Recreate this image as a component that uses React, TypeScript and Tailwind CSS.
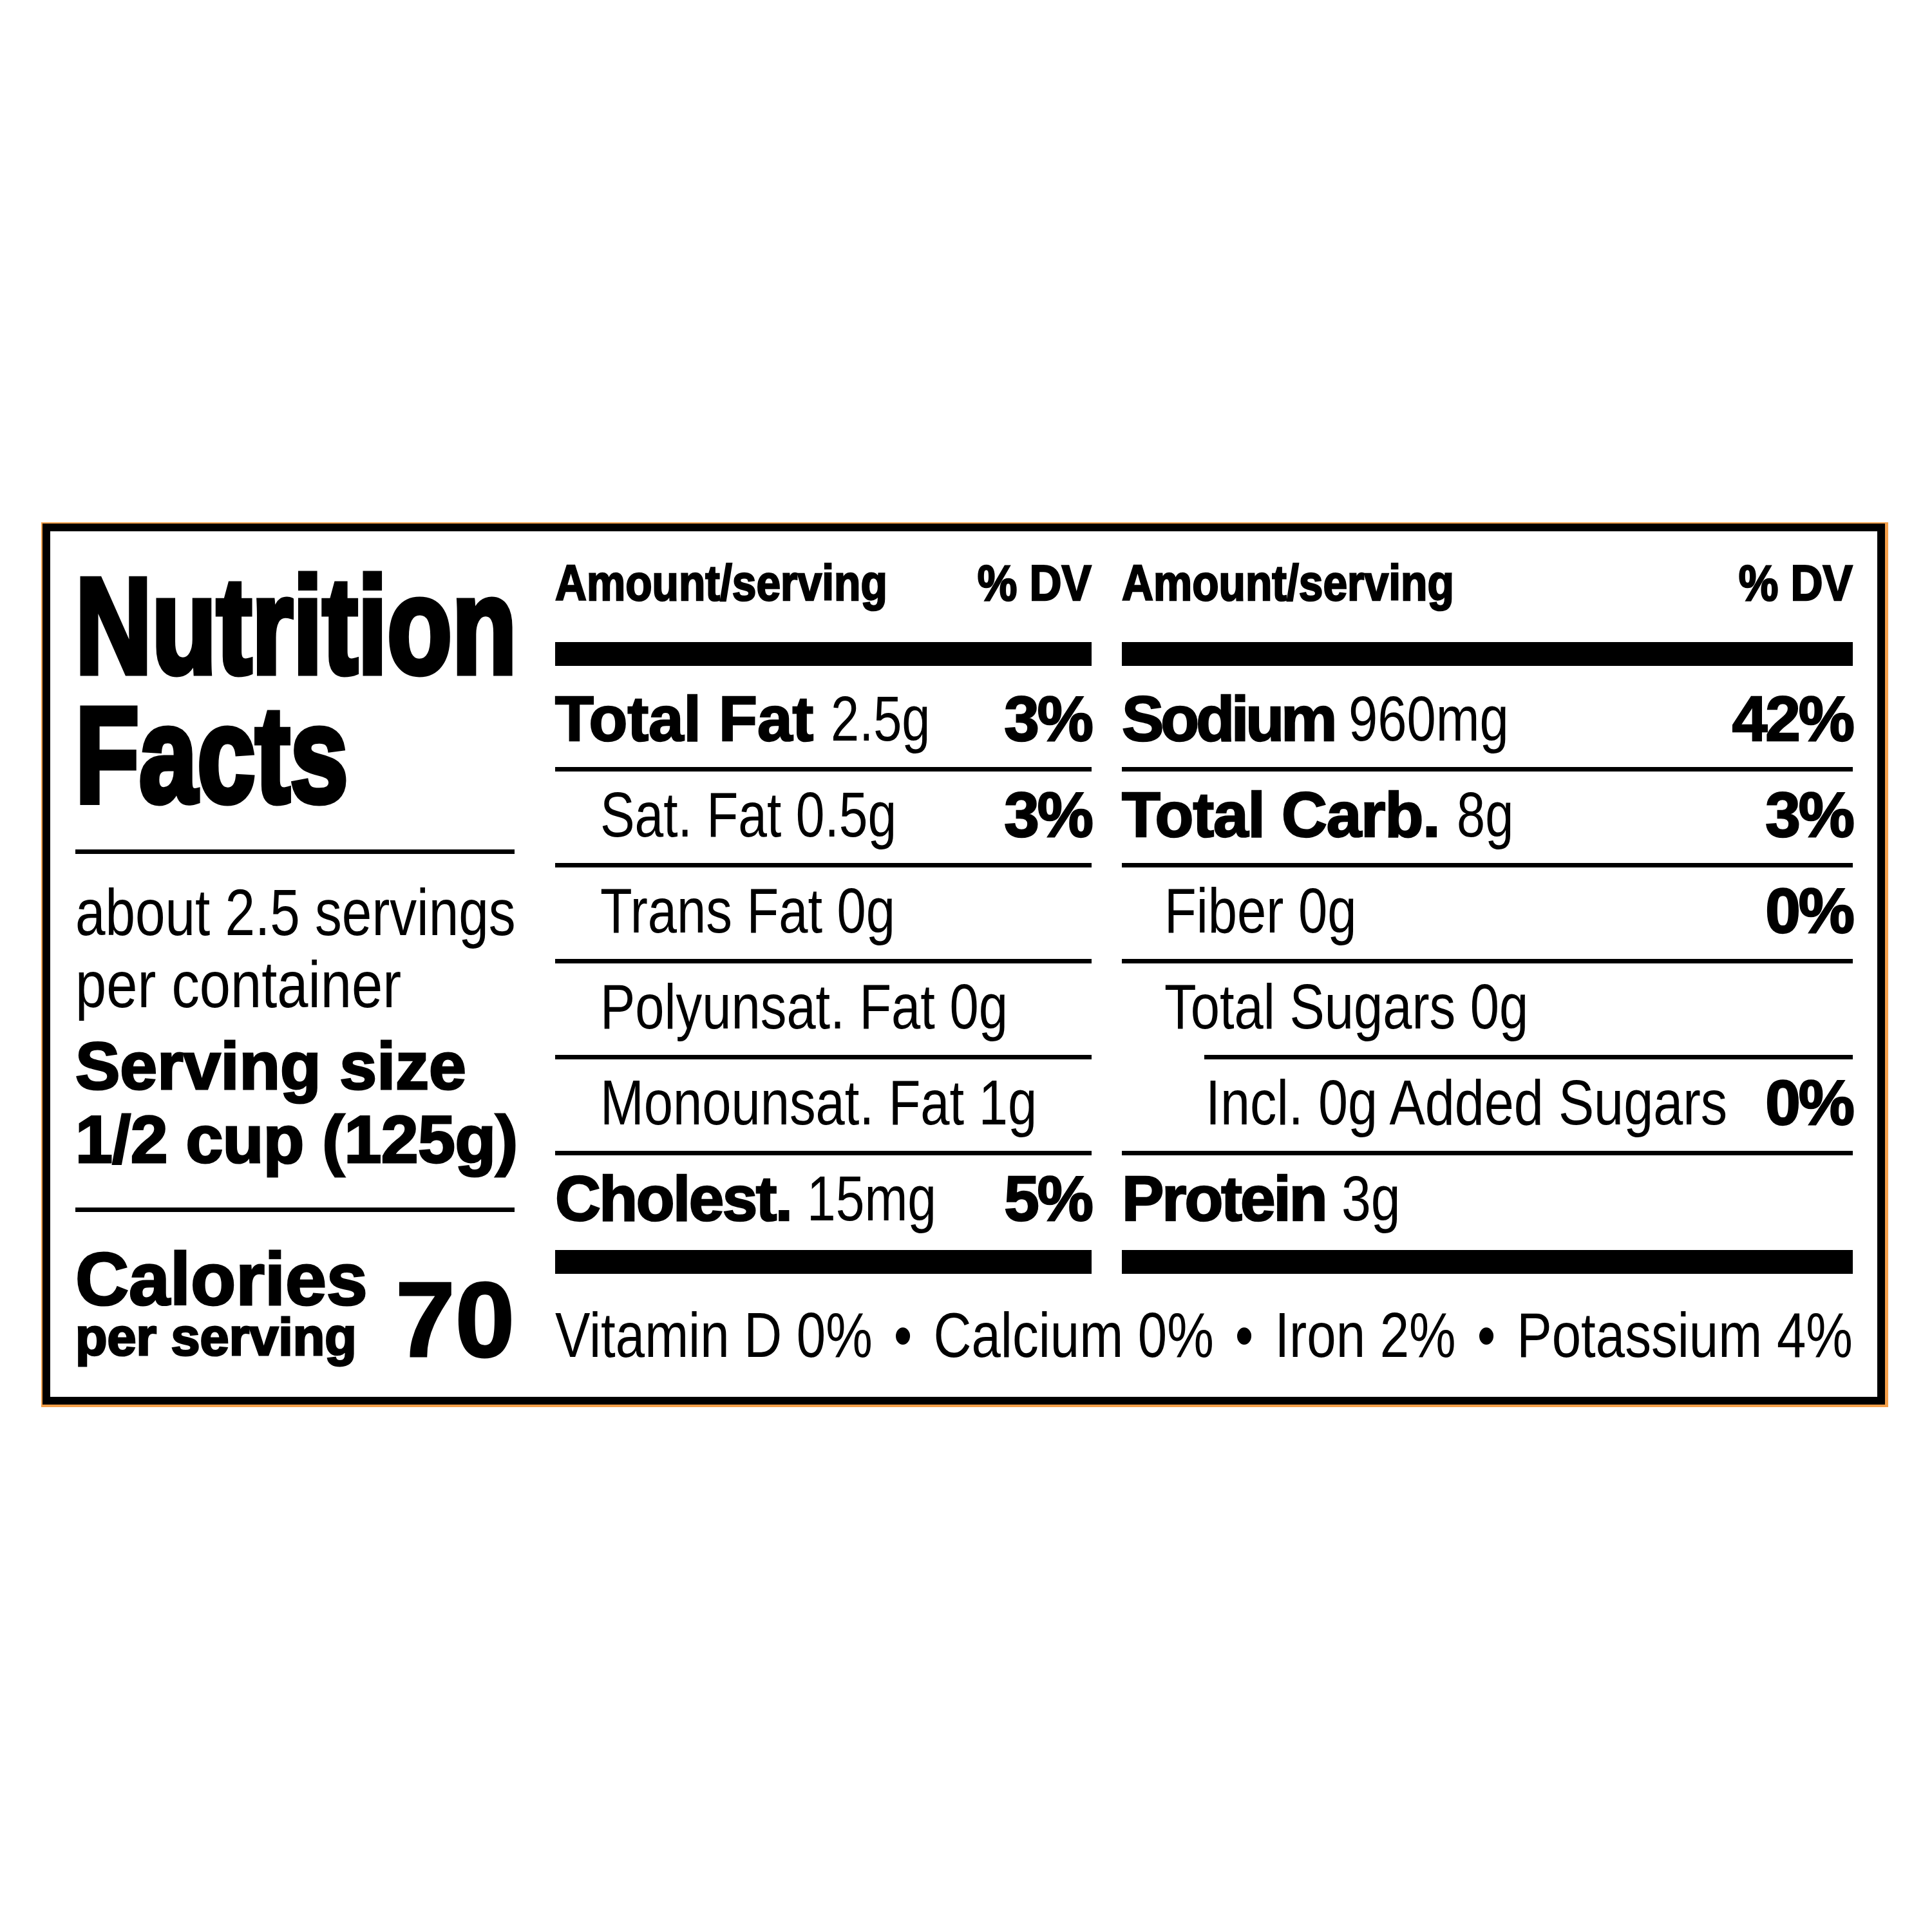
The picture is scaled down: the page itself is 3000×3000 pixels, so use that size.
import React from "react";

const SANS = "font-['Liberation_Sans','Arial',sans-serif]";

type Row = {
  bold?: string;
  boldCls?: string;
  reg?: string;
  regCls?: string;
  pct?: string;
  indent?: number;
  lineIndent?: number;
  last?: boolean;
};

const mid: Row[] = [
  { bold: "Total Fat", boldCls: "tracking-[0px]", reg: "2.5g", regCls: "scale-x-[0.81]", pct: "3%" },
  { reg: "Sat. Fat 0.5g", regCls: "scale-x-[0.82]", pct: "3%", indent: 70 },
  { reg: "Trans Fat 0g", regCls: "scale-x-[0.83]", indent: 70 },
  { reg: "Polyunsat. Fat 0g", regCls: "scale-x-[0.83]", indent: 70 },
  { reg: "Monounsat. Fat 1g", regCls: "scale-x-[0.83]", indent: 70 },
  { bold: "Cholest.", boldCls: "tracking-[-2.5px]", reg: "15mg", regCls: "scale-x-[0.82]", pct: "5%", last: true },
];

const right: Row[] = [
  { bold: "Sodium", boldCls: "tracking-[-5px]", reg: "960mg", regCls: "scale-x-[0.83]", pct: "42%" },
  { bold: "Total Carb.", boldCls: "tracking-[-1px]", reg: "8g", regCls: "scale-x-[0.81]", pct: "3%" },
  { reg: "Fiber 0g", regCls: "scale-x-[0.83]", pct: "0%", indent: 66 },
  { reg: "Total Sugars 0g", regCls: "scale-x-[0.83]", indent: 66, lineIndent: 128 },
  { reg: "Incl. 0g Added Sugars", regCls: "scale-x-[0.845]", pct: "0%", indent: 130 },
  { bold: "Protein", boldCls: "tracking-[-3px]", reg: "3g", regCls: "scale-x-[0.84]", last: true },
];

function NutRow({ r }: { r: Row }) {
  return (
    <div className="flex flex-col">
      <div
        className={`${SANS} h-[142px] flex justify-between text-[98px] leading-[134px] text-black whitespace-nowrap`}
        style={{ paddingLeft: r.indent ?? 0 }}
      >
        <div className="flex-1 min-w-0">
          {r.bold && (
            <span className={`font-bold [-webkit-text-stroke:2.5px_black] ${r.boldCls ?? ""}`}>{r.bold} </span>
          )}
          {r.reg && <span className={`inline-block origin-left ${r.regCls ?? ""}`}>{r.reg}</span>}
        </div>
        {r.pct && (
          <div className="shrink-0 font-bold tracking-[-3px] [-webkit-text-stroke:2.5px_black]">{r.pct}</div>
        )}
      </div>
      {!r.last && <div className="h-[7px] bg-black" style={{ marginLeft: r.lineIndent ?? 0 }} />}
    </div>
  );
}

function Column({ rows, width }: { rows: Row[]; width: string }) {
  return (
    <div className={`${width} shrink-0 flex flex-col`}>
      <div
        className={`${SANS} font-bold flex justify-between text-[77px] leading-[90px] whitespace-nowrap [-webkit-text-stroke:2.5px_black]`}
      >
        <span className="inline-block origin-left scale-x-[0.88]">Amount/serving</span>
        <span className="inline-block origin-right scale-x-[0.9]">% DV</span>
      </div>
      <div className="mt-[47px] h-[37px] bg-black" />
      <div className="pt-[15px] flex flex-col">
        {rows.map((r, i) => (
          <NutRow key={i} r={r} />
        ))}
      </div>
      <div className="mt-[5px] h-[37px] bg-black" />
    </div>
  );
}

export default function App() {
  return (
    <div className="w-[3000px] h-[3000px] overflow-hidden bg-white pt-[811px] pl-[64px] text-black">
      <div className="w-[2868px] h-[1374px] border-[#f5a04a] border-t-2 border-l-2 border-r-[5px] border-b-4">
        <div className="h-full border-[12px] border-black bg-white flex pl-[39px] pr-[38px]">
          {/* Left column */}
          <div className="w-[682px] shrink-0 pt-[47px] flex flex-col">
            <div
              className={`${SANS} font-bold text-[212px] leading-[200px] whitespace-nowrap [-webkit-text-stroke:9px_black]`}
            >
              <div>
                <span className="inline-block origin-left scale-x-[0.776]">Nutrition</span>
              </div>
              <div>
                <span className="inline-block origin-left scale-x-[0.765]">Facts</span>
              </div>
            </div>
            <div className="mt-[47px] h-[7px] bg-black" />
            <div className={`${SANS} mt-[35px] text-[102px] leading-[112px] whitespace-nowrap`}>
              <div>
                <span className="inline-block origin-left scale-x-[0.82]">about 2.5 servings</span>
              </div>
              <div>
                <span className="inline-block origin-left scale-x-[0.85]">per container</span>
              </div>
            </div>
            <div
              className={`${SANS} font-bold mt-[13px] text-[104px] leading-[114px] whitespace-nowrap [-webkit-text-stroke:3px_black]`}
            >
              <div>Serving size</div>
              <div className="tracking-[-0.5px]">1/2 cup (125g)</div>
            </div>
            <div className="mt-[49px] h-[7px] bg-black" />
            <div className={`${SANS} font-bold mt-[54px] flex items-end justify-between [-webkit-text-stroke:3px_black]`}>
              <div className="whitespace-nowrap">
                <div className="text-[115px] leading-[100px]">Calories</div>
                <div className="text-[81px] leading-[80px]">per serving</div>
              </div>
              <div className="text-[166px] leading-[134px]">70</div>
            </div>
          </div>

          {/* Right area */}
          <div className="ml-[63px] w-[2015px] shrink-0 pt-[35px] flex flex-col">
            <div className="flex gap-[47px]">
              <Column rows={mid} width="w-[833px]" />
              <Column rows={right} width="w-[1135px]" />
            </div>
            <div className="mt-[40px] w-[2015px]">
              <div
                className={`${SANS} w-[2420px] origin-left scale-x-[0.8326] flex justify-between text-[98px] leading-[110px] whitespace-nowrap`}
              >
                <span>Vitamin D 0%</span>
                <span>•</span>
                <span>Calcium 0%</span>
                <span>•</span>
                <span>Iron 2%</span>
                <span>•</span>
                <span>Potassium 4%</span>
              </div>
            </div>
          </div>
        </div>
      </div>
    </div>
  );
}
